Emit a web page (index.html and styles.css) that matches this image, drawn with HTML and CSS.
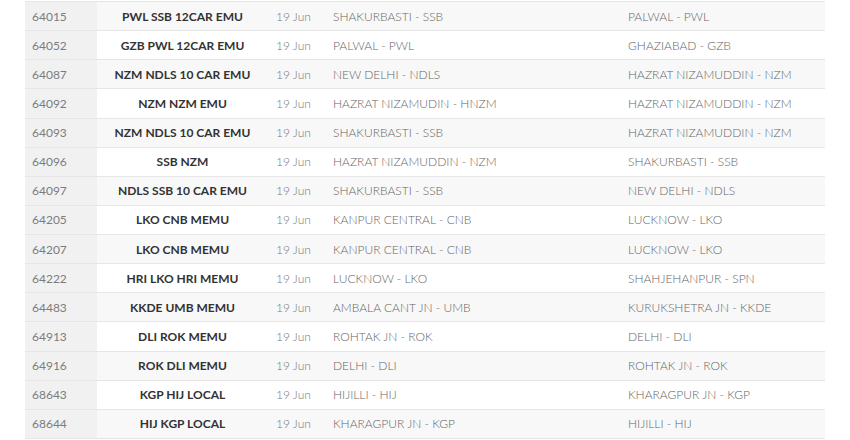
FILE: index.html
```html
<!DOCTYPE html>
<html>
<head>
<meta charset="utf-8">
<link rel="stylesheet" href="styles.css">
</head>
<body>
<div class="table">
  <div class="row"><div class="c-id">64015</div><div class="c-name">PWL SSB 12CAR EMU</div><div class="c-date">19 Jun</div><div class="c-from">SHAKURBASTI - SSB</div><div class="c-to">PALWAL - PWL</div></div>
  <div class="row"><div class="c-id">64052</div><div class="c-name">GZB PWL 12CAR EMU</div><div class="c-date">19 Jun</div><div class="c-from">PALWAL - PWL</div><div class="c-to">GHAZIABAD - GZB</div></div>
  <div class="row"><div class="c-id">64087</div><div class="c-name">NZM NDLS 10 CAR EMU</div><div class="c-date">19 Jun</div><div class="c-from">NEW DELHI - NDLS</div><div class="c-to">HAZRAT NIZAMUDDIN - NZM</div></div>
  <div class="row"><div class="c-id">64092</div><div class="c-name">NZM NZM EMU</div><div class="c-date">19 Jun</div><div class="c-from">HAZRAT NIZAMUDIN - HNZM</div><div class="c-to">HAZRAT NIZAMUDDIN - NZM</div></div>
  <div class="row"><div class="c-id">64093</div><div class="c-name">NZM NDLS 10 CAR EMU</div><div class="c-date">19 Jun</div><div class="c-from">SHAKURBASTI - SSB</div><div class="c-to">HAZRAT NIZAMUDDIN - NZM</div></div>
  <div class="row"><div class="c-id">64096</div><div class="c-name">SSB NZM</div><div class="c-date">19 Jun</div><div class="c-from">HAZRAT NIZAMUDDIN - NZM</div><div class="c-to">SHAKURBASTI - SSB</div></div>
  <div class="row"><div class="c-id">64097</div><div class="c-name">NDLS SSB 10 CAR EMU</div><div class="c-date">19 Jun</div><div class="c-from">SHAKURBASTI - SSB</div><div class="c-to">NEW DELHI - NDLS</div></div>
  <div class="row"><div class="c-id">64205</div><div class="c-name">LKO CNB MEMU</div><div class="c-date">19 Jun</div><div class="c-from">KANPUR CENTRAL - CNB</div><div class="c-to">LUCKNOW - LKO</div></div>
  <div class="row"><div class="c-id">64207</div><div class="c-name">LKO CNB MEMU</div><div class="c-date">19 Jun</div><div class="c-from">KANPUR CENTRAL - CNB</div><div class="c-to">LUCKNOW - LKO</div></div>
  <div class="row"><div class="c-id">64222</div><div class="c-name">HRI LKO HRI MEMU</div><div class="c-date">19 Jun</div><div class="c-from">LUCKNOW - LKO</div><div class="c-to">SHAHJEHANPUR - SPN</div></div>
  <div class="row"><div class="c-id">64483</div><div class="c-name">KKDE UMB MEMU</div><div class="c-date">19 Jun</div><div class="c-from">AMBALA CANT JN - UMB</div><div class="c-to">KURUKSHETRA JN - KKDE</div></div>
  <div class="row"><div class="c-id">64913</div><div class="c-name">DLI ROK MEMU</div><div class="c-date">19 Jun</div><div class="c-from">ROHTAK JN - ROK</div><div class="c-to">DELHI - DLI</div></div>
  <div class="row"><div class="c-id">64916</div><div class="c-name">ROK DLI MEMU</div><div class="c-date">19 Jun</div><div class="c-from">DELHI - DLI</div><div class="c-to">ROHTAK JN - ROK</div></div>
  <div class="row"><div class="c-id">68643</div><div class="c-name">KGP HIJ LOCAL</div><div class="c-date">19 Jun</div><div class="c-from">HIJILLI - HIJ</div><div class="c-to">KHARAGPUR JN - KGP</div></div>
  <div class="row"><div class="c-id">68644</div><div class="c-name">HIJ KGP LOCAL</div><div class="c-date">19 Jun</div><div class="c-from">KHARAGPUR JN - KGP</div><div class="c-to">HIJILLI - HIJ</div></div>
</div>
</body>
</html>
```

FILE: styles.css
```css
html, body {
  margin: 0;
  padding: 0;
  background: #ffffff;
}
body {
  font-family: Lato, "Open Sans", sans-serif;
  font-size: 12px;
  padding: 1px 25px 0 25px;
}
.table {
  width: 800px;
  border-bottom: 1px solid #e6e6e6;
}
.row {
  display: flex;
  align-items: stretch;
  height: 29.13px;
  box-sizing: border-box;
  border-top: 1px solid #e6e6e6;
  background: #ffffff;
}
.row:nth-child(odd) {
  background: #f8f8f8;
}
.row > div {
  display: flex;
  align-items: center;
  white-space: nowrap;
  box-sizing: border-box;
}
.c-id {
  width: 72px;
  padding-left: 7px;
  background: #f1f1f1;
  color: #7c7c7c;
}
.c-name {
  width: 171px;
  justify-content: center;
  font-weight: 700;
  color: #333333;
}
.c-date {
  width: 57px;
  padding-left: 8px;
  color: #777777;
  font-weight: 300;
}
.c-from {
  width: 295px;
  padding-left: 8px;
  color: #666666;
  font-weight: 300;
}
.c-to {
  flex: 1;
  padding-left: 8px;
  color: #666666;
  font-weight: 300;
}
```
